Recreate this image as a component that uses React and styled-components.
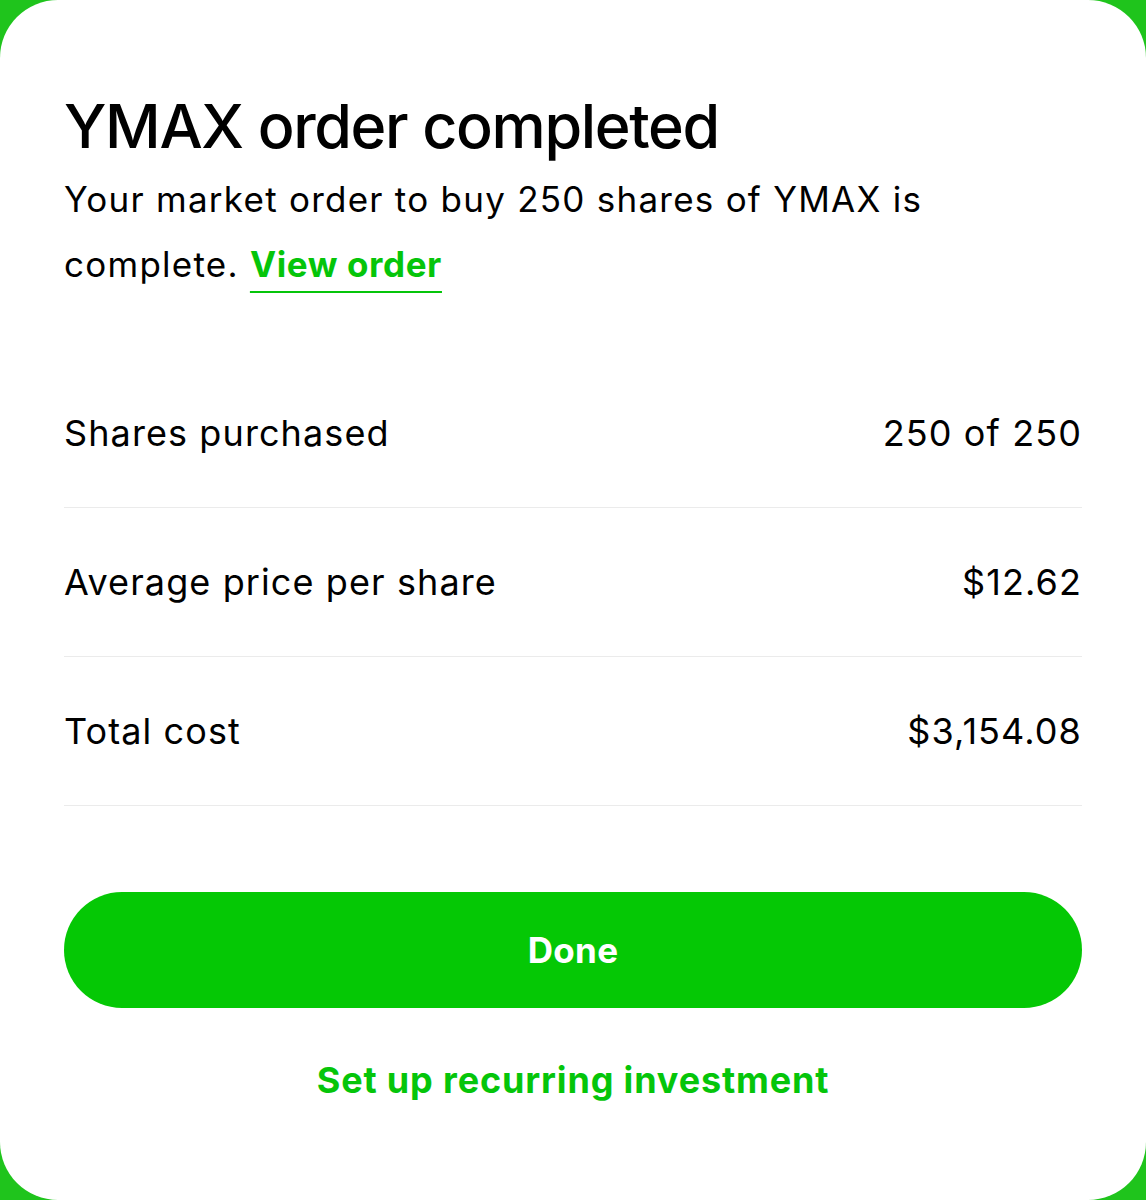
import React from 'react';
import styled, { createGlobalStyle } from 'styled-components';

const GlobalStyle = createGlobalStyle`
  html, body {
    margin: 0;
    padding: 0;
    background: #1fc41c;
  }
  body {
    font-family: Inter, 'Noto Sans', 'Liberation Sans', sans-serif;
    -webkit-font-smoothing: antialiased;
  }
`;

// 전체 카드 (화면을 채우는 흰색 시트)
const Sheet = styled.div`
  box-sizing: border-box;
  width: 1146px;
  height: 1200px;
  background: #ffffff;
  border-radius: 58px;
  padding: 88px 64px 0;
  display: flex;
  flex-direction: column;
  color: #000000;
`;

const Title = styled.h1`
  margin: 0;
  font-size: 61px;
  line-height: 76px;
  font-weight: 500;
  letter-spacing: -1.35px;
`;

const Message = styled.p`
  margin: 3px 0 0;
  font-size: 35px;
  line-height: 65px;
  font-weight: 400;
  letter-spacing: 1.25px;
`;

// 밑줄은 텍스트 아래 약간 떨어져서 표시됨
const InlineLink = styled.a`
  color: #05c50a;
  font-weight: 700;
  letter-spacing: 0.6px;
  text-decoration: underline;
  text-decoration-thickness: 2px;
  text-underline-offset: 14px;
`;

const DetailList = styled.div`
  margin-top: 62px;
  display: flex;
  flex-direction: column;
`;

const DetailRow = styled.div`
  box-sizing: border-box;
  height: 149px;
  display: flex;
  align-items: center;
  justify-content: space-between;
  border-bottom: 1.5px solid #ebebeb;
  font-size: 36px;
  letter-spacing: 1.1px;
`;

const Label = styled.span`
  font-weight: 400;
`;

const Value = styled.span`
  font-weight: 400;
`;

const PrimaryButton = styled.button`
  margin-top: 86px;
  height: 116px;
  width: 100%;
  border: none;
  border-radius: 58px;
  background: #05c805;
  color: #ffffff;
  font-family: inherit;
  font-size: 35px;
  font-weight: 700;
  letter-spacing: 0.3px;
  cursor: pointer;
`;

const TextButton = styled.button`
  margin-top: 42px;
  align-self: center;
  border: none;
  background: transparent;
  color: #05c50a;
  font-family: inherit;
  font-size: 36px;
  line-height: 60px;
  font-weight: 700;
  letter-spacing: 0.85px;
  cursor: pointer;
  padding: 0;
`;

const details = [
  { label: 'Shares purchased', value: '250 of 250' },
  { label: 'Average price per share', value: '$12.62' },
  { label: 'Total cost', value: '$3,154.08' },
];

function App() {
  return (
    <>
      <GlobalStyle />
      <Sheet>
        <Title>YMAX order completed</Title>
        <Message>
          Your market order to buy 250 shares of YMAX is complete.{' '}
          <InlineLink href="#">View order</InlineLink>
        </Message>

        <DetailList>
          {details.map((d) => (
            <DetailRow key={d.label}>
              <Label>{d.label}</Label>
              <Value>{d.value}</Value>
            </DetailRow>
          ))}
        </DetailList>

        <PrimaryButton>Done</PrimaryButton>
        <TextButton>Set up recurring investment</TextButton>
      </Sheet>
    </>
  );
}

export default App;
